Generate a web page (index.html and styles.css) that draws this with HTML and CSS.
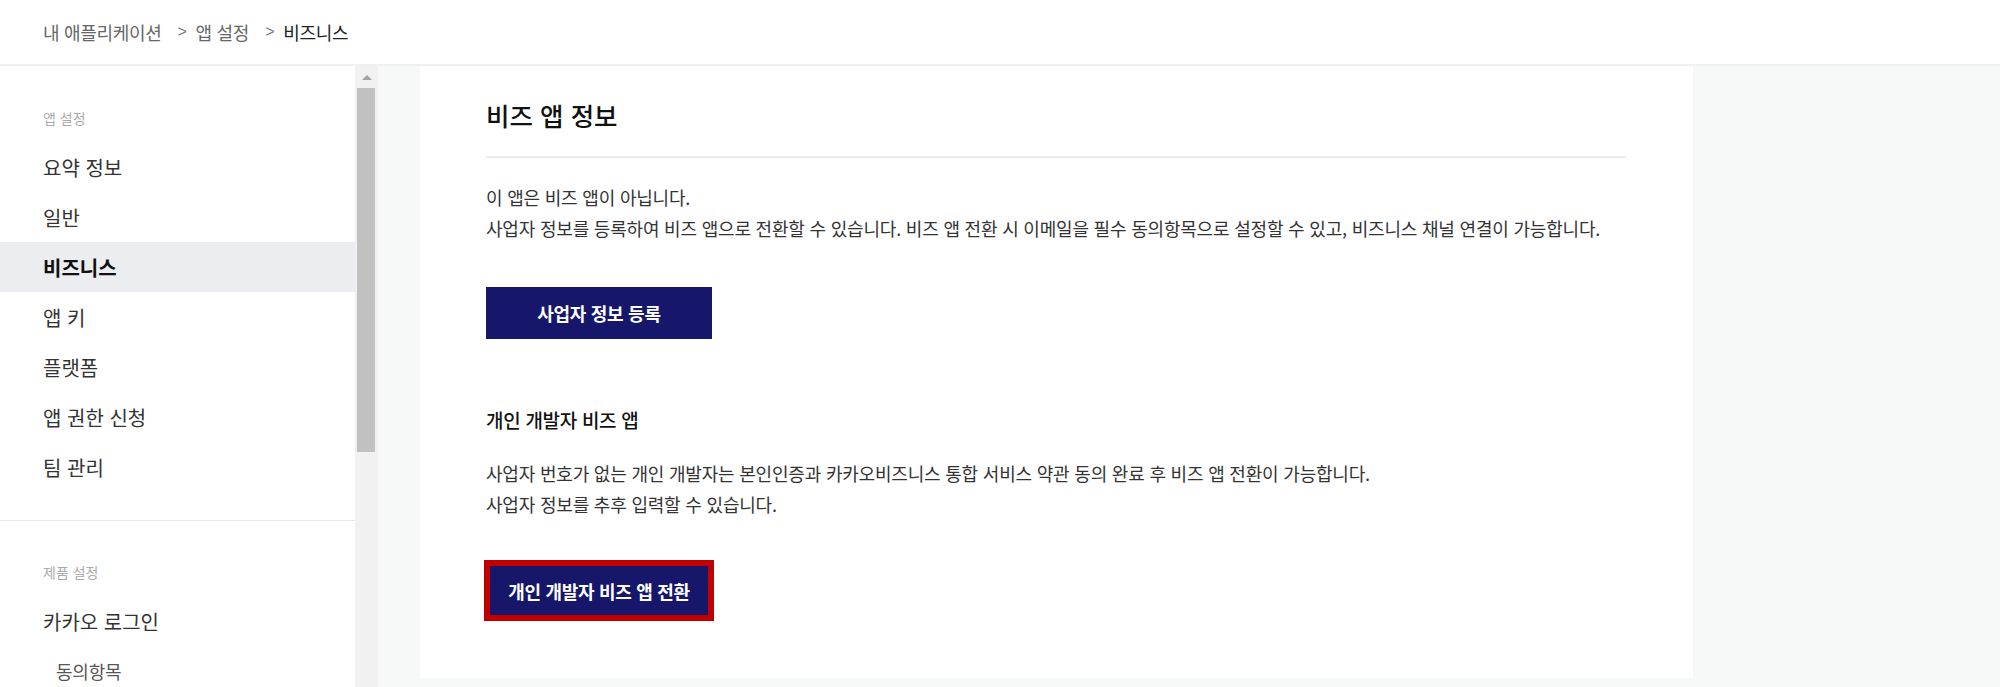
FILE: index.html
```html
<!DOCTYPE html>
<html lang="ko">
<head>
<meta charset="utf-8">
<title>비즈니스 - 앱 설정</title>
<link rel="stylesheet" href="styles.css">
</head>
<body>
<header class="topbar">
  <nav class="crumbs">
    <span class="crumb">내 애플리케이션</span>
    <span class="sep">&gt;</span>
    <span class="crumb">앱 설정</span>
    <span class="sep">&gt;</span>
    <span class="crumb current">비즈니스</span>
  </nav>
</header>
<div class="layout">
  <aside class="sidebar">
    <section class="side-group">
      <div class="side-label">앱 설정</div>
      <ul class="side-list">
        <li class="side-item">요약 정보</li>
        <li class="side-item">일반</li>
        <li class="side-item active">비즈니스</li>
        <li class="side-item">앱 키</li>
        <li class="side-item">플랫폼</li>
        <li class="side-item">앱 권한 신청</li>
        <li class="side-item">팀 관리</li>
      </ul>
    </section>
    <section class="side-group second">
      <div class="side-label">제품 설정</div>
      <ul class="side-list">
        <li class="side-item">카카오 로그인</li>
        <li class="side-item sub">동의항목</li>
      </ul>
    </section>
  </aside>
  <div class="scrollbar">
    <div class="scroll-btn"><span class="arrow-up"></span></div>
    <div class="scroll-thumb"></div>
  </div>
  <main class="main">
    <div class="card">
      <h1 class="card-title">비즈 앱 정보</h1>
      <p class="desc">이 앱은 비즈 앱이 아닙니다.<br>사업자 정보를 등록하여 비즈 앱으로 전환할 수 있습니다. 비즈 앱 전환 시 이메일을 필수 동의항목으로 설정할 수 있고, 비즈니스 채널 연결이 가능합니다.</p>
      <button class="btn btn-register">사업자 정보 등록</button>
      <h2 class="sub-title">개인 개발자 비즈 앱</h2>
      <p class="desc desc-2">사업자 번호가 없는 개인 개발자는 본인인증과 카카오비즈니스 통합 서비스 약관 동의 완료 후 비즈 앱 전환이 가능합니다.<br>사업자 정보를 추후 입력할 수 있습니다.</p>
      <button class="btn btn-switch">개인 개발자 비즈 앱 전환</button>
    </div>
  </main>
</div>
</body>
</html>
```
FILE: styles.css
```css
* { box-sizing: border-box; }
html, body {
  margin: 0;
  padding: 0;
  height: 100%;
  overflow: hidden;
  background: #ffffff;
  font-family: "Noto Sans CJK KR", "Noto Sans", sans-serif;
  color: #333;
}

.topbar {
  height: 66px;
  border-bottom: 2px solid #f0f0f0;
  display: flex;
  align-items: center;
  padding-left: 43px;
  padding-bottom: 1px;
}
.crumbs {
  display: flex;
  align-items: center;
  font-size: 18px;
  line-height: 24px;
  letter-spacing: -0.3px;
}
.crumb { color: #666; }
.crumb.current { color: #222; }
.sep {
  color: #777;
  font-family: "Liberation Sans", sans-serif;
  font-size: 16px;
  margin: 0 9px 0 16px;
}

.layout {
  display: flex;
  height: calc(100vh - 66px);
  overflow: hidden;
}

.sidebar {
  width: 355px;
  flex: none;
  background: #fff;
}
.side-group {
  padding-top: 42px;
  padding-bottom: 28px;
  border-bottom: 1px solid #e8e8e8;
}
.side-group.second {
  padding-top: 41px;
  border-bottom: none;
}
.side-label {
  padding-left: 43px;
  font-size: 14px;
  line-height: 20px;
  color: #aaa;
  margin-bottom: 14px;
}
.side-list {
  list-style: none;
  margin: 0;
  padding: 0;
}
.side-item {
  height: 50px;
  display: flex;
  align-items: center;
  padding-left: 43px;
  font-size: 20px;
  letter-spacing: 0;
  color: #333;
}
.side-item.active {
  background: #ebedf1;
  color: #111;
  font-weight: 700;
}
.side-item.sub {
  padding-left: 56px;
  font-size: 18px;
  letter-spacing: -0.2px;
  color: #555;
}

.scrollbar {
  width: 23px;
  flex: none;
  background: #f1f1f1;
  display: flex;
  flex-direction: column;
  align-items: flex-start;
}
.scroll-btn {
  width: 23px;
  height: 22px;
  display: flex;
  align-items: center;
  justify-content: center;
}
.arrow-up {
  width: 0;
  height: 0;
  border-left: 5px solid transparent;
  border-right: 5px solid transparent;
  border-bottom: 5px solid #a3a3a3;
}
.scroll-thumb {
  margin-left: 2px;
  width: 18px;
  height: 364px;
  background: #c1c1c1;
}

.main {
  flex: 1;
  background: #f7f8f8;
  padding-left: 42px;
  display: flex;
  align-items: flex-start;
}
.card {
  width: 1273px;
  background: #fff;
  padding: 33px 67px 57px 66px;
}
.card-title {
  margin: 0;
  font-size: 25.5px;
  line-height: 32px;
  font-weight: 500;
  color: #111;
  letter-spacing: 0;
  padding-bottom: 25px;
  border-bottom: 2px solid #ededed;
}
.desc {
  margin: 24px 0 0;
  font-size: 18px;
  line-height: 31px;
  letter-spacing: -0.2px;
  color: #333;
}
.btn {
  display: flex;
  align-items: center;
  justify-content: center;
  border: none;
  background: #16176a;
  color: #fff;
  font-family: "Noto Sans CJK KR", "Noto Sans", sans-serif;
  font-size: 18px;
  font-weight: 700;
  letter-spacing: -0.3px;
  padding: 0;
}
.btn-register {
  margin-top: 43px;
  width: 226px;
  height: 52px;
}
.sub-title {
  margin: 67px 0 0;
  font-size: 19px;
  line-height: 28px;
  font-weight: 500;
  color: #111;
  letter-spacing: -0.3px;
}
.desc-2 {
  margin-top: 24px;
}
.btn-switch {
  margin-top: 40px;
  margin-left: -2px;
  width: 230px;
  height: 61px;
  border: 6px solid #c00000;
}
```
